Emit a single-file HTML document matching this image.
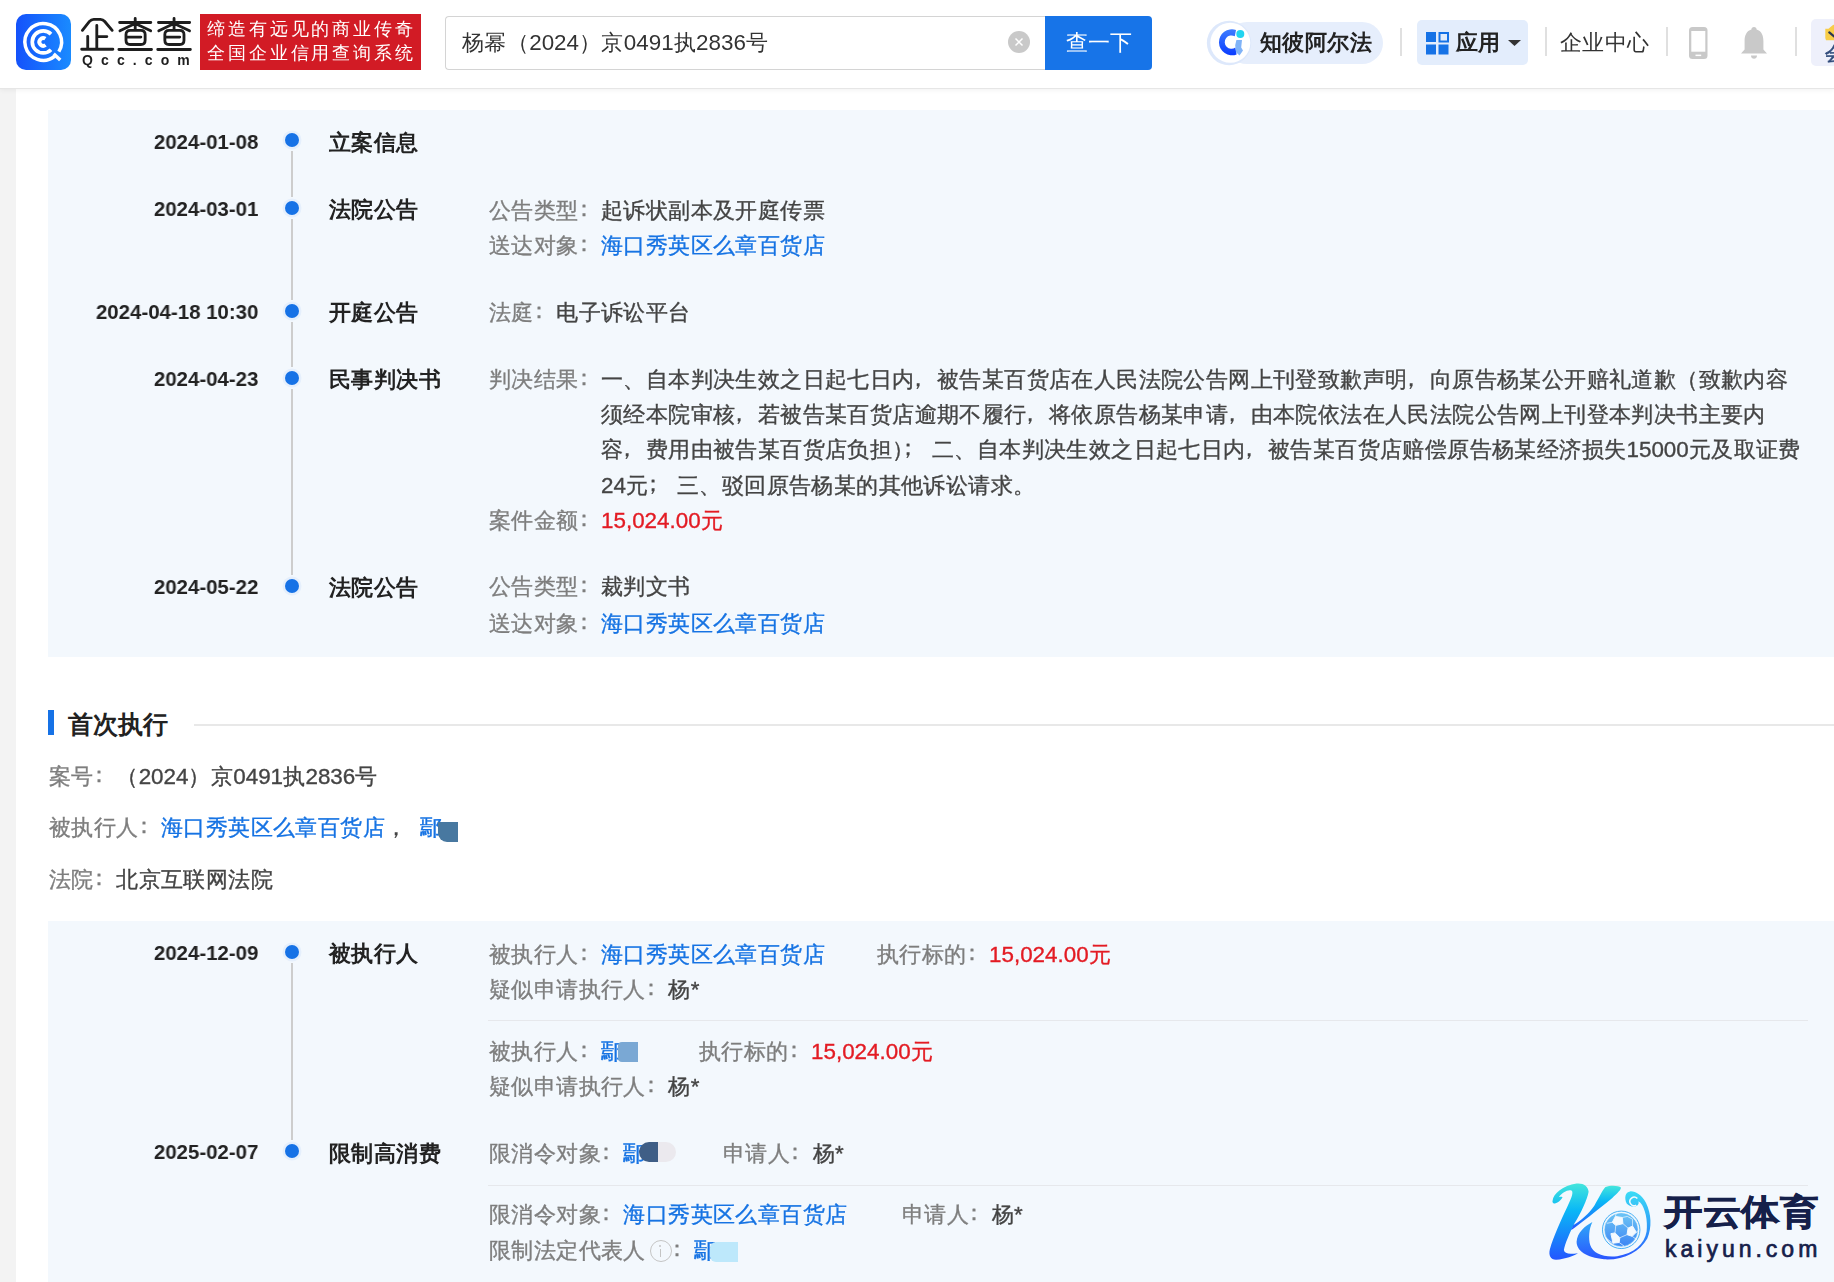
<!DOCTYPE html>
<html><head><meta charset="utf-8">
<style>
*{box-sizing:border-box;margin:0;padding:0}
html,body{width:1834px;height:1282px;overflow:hidden}
body{font-family:"Liberation Sans",sans-serif;background:#fff;position:relative;color:#333}
.hdr{position:absolute;left:0;top:0;width:1834px;height:88px;background:#fff;z-index:5;box-shadow:0 1px 0 #e6e6e6,0 2px 5px rgba(0,0,0,0.06)}
.strip{position:absolute;left:0;top:88px;width:16px;height:1194px;background:#f3f3f3}
.panel{position:absolute;left:48px;width:1786px;background:#f3f8fd}
.ln{position:absolute;white-space:nowrap;font-size:22.4px;line-height:35px;height:35px;letter-spacing:0.4px;-webkit-text-stroke-width:0.35px}
.as{letter-spacing:0}
.ln,.tt,.dt,.hdr div{will-change:transform}
.pc{position:relative;left:-5.8px;top:-2.4px}
.pm{position:relative;left:-7.3px;top:-1px}
.ps{position:relative;left:-6px;top:-2px}
.lb{color:#7e7e7e}
.vl{color:#444}
.lk{color:#1673e3}
.rd{color:#e31b23}
.dt{position:absolute;left:0;width:258.4px;text-align:right;transform:scaleX(0.973);transform-origin:258.4px 0;font-size:21px;font-weight:bold;line-height:35px;color:#222;white-space:nowrap}
.dot{position:absolute;left:285px;width:14px;height:14px;border-radius:50%;background:#1672e6;box-shadow:0 0 0 2.5px #e5effc}
.vl1{position:absolute;left:291.4px;width:1.3px;background:#cdcdcd}
.tt{position:absolute;left:328.5px;letter-spacing:0.4px;font-size:22.4px;font-weight:bold;line-height:35px;color:#222;white-space:nowrap}
.sep{position:absolute;left:488px;width:1320px;height:1px;background:#e6e8ec}
.info{display:inline-block;width:22px;height:22px;border:1.5px solid #c4c4c4;border-radius:50%;vertical-align:-4px;margin-left:4px;margin-right:0;position:relative}
.info:before{content:"";position:absolute;left:8.75px;top:7.5px;width:1.5px;height:8px;background:#c4c4c4}
.info:after{content:"";position:absolute;left:8.5px;top:3.8px;width:2px;height:2px;border-radius:1px;background:#c4c4c4}
</style></head><body>
<div class="hdr">
  <!-- logo icon -->
  <div style="position:absolute;left:16px;top:14px;width:55px;height:56px;border-radius:10px;background:linear-gradient(90deg,#1452fb,#1a8bff)">
    <svg width="55" height="56" viewBox="0 0 55 56" style="position:absolute;left:0;top:0">
      <g fill="none" stroke="#fff">
        <path d="M42.81 37.67 A18.35 18.35 0 1 0 38.55 42.41" stroke-width="3.5"/>
        <path d="M37.6 39.9 L44.25 46.0" stroke-width="3.5"/>
        <path d="M35.03 20.17 A11 11 0 1 0 35.03 35.73" stroke-width="3.7"/>
        <path d="M29.35 24.72 A3.85 3.85 0 1 0 29.57 31.02" stroke-width="3.9"/>
      </g>
    </svg>
  </div>
  <svg width="130" height="68" viewBox="0 0 1834 959" style="position:absolute;left:70px;top:8px">
    <g fill="none" stroke="#1e1e1e" stroke-width="40" stroke-linecap="round" stroke-linejoin="round">
      <path d="M175 315 L275 190 Q300 160 335 160 L430 160 Q465 160 490 190 L595 315"/>
      <path d="M378 245 L378 570 M378 403 L520 403 M250 400 L250 570 M165 582 L605 582"/>
      <g id="cha">
        <path d="M700 205 L1140 205 M920 148 L920 300 M912 222 L705 322 M928 222 L1138 322"/>
        <path d="M850 315 L1000 315 Q1060 315 1060 375 L1060 455 Q1060 515 1000 515 L850 515 Q790 515 790 455 L790 375 Q790 315 850 315 Z"/>
        <path d="M800 410 L1000 410 M690 585 L1150 585"/>
      </g>
      <use href="#cha" x="548"/>
    </g>
  </svg>
  <div style="position:absolute;left:82px;top:50.6px;font-size:14px;line-height:18px;color:#1e1e1e;font-weight:bold;letter-spacing:8.1px;white-space:nowrap">Qcc.com</div>
  <div style="position:absolute;left:200px;top:14px;width:221px;height:56px;background:#d21b25;color:#fff;font-size:18px;line-height:24.5px;padding:2.5px 0 0 7px;letter-spacing:2.9px;white-space:nowrap">缔造有远见的商业传奇<br>全国企业信用查询系统</div>
  <!-- search -->
  <div style="position:absolute;left:445px;top:16px;width:602px;height:54px;border:1px solid #d4d4d4;border-right:none;border-radius:4px 0 0 4px;background:#fff"></div>
  <div style="position:absolute;left:462px;top:25px;font-size:22.4px;line-height:35px;color:#333;white-space:nowrap;letter-spacing:0.4px">杨幂（<span class="as">2024</span>）京<span class="as">0491</span>执<span class="as">2836</span>号</div>
  <div style="position:absolute;left:1008px;top:31px;width:22px;height:22px;border-radius:50%;background:#c9c9c9">
    <svg width="22" height="22" viewBox="0 0 22 22" style="position:absolute;left:0;top:0"><path d="M7.5 7.5 L14.5 14.5 M14.5 7.5 L7.5 14.5" stroke="#fff" stroke-width="1.5"/></svg>
  </div>
  <div style="position:absolute;left:1045px;top:16px;width:107px;height:54px;background:#1774e8;border-radius:0 4px 4px 0;color:#fff;font-size:22.4px;line-height:54px;text-align:center;white-space:nowrap">查一下</div>
  <!-- zhibi -->
  <div style="position:absolute;left:1226px;top:22px;width:157px;height:42px;border-radius:21px;background:#e6eefc"></div>
  <svg width="50" height="50" viewBox="0 0 50 50" style="position:absolute;left:1204px;top:18px">
    <defs><linearGradient id="cg" x1="0" y1="0" x2="0" y2="1"><stop offset="0" stop-color="#3f7dff"/><stop offset="1" stop-color="#0a3cff"/></linearGradient></defs>
    <circle cx="25.05" cy="24.97" r="22.2" fill="#dde8fb"/>
    <circle cx="26.3" cy="24.85" r="20" fill="#fff"/>
    <path d="M32 11.9 A13 13 0 1 0 32.6 36.4 L31.4 29.5 A6.7 6.7 0 1 1 30.8 18.3 Z" fill="url(#cg)"/>
    <circle cx="36.3" cy="16" r="4" fill="#22d4f0"/>
    <path d="M32.4 22 L38 22 L37.2 29.6 L39 32.4 L35.5 37.6 L32 34.3 L31.2 27.3 Z" fill="#80b3f7"/>
  </svg>
  <div style="position:absolute;left:1259.5px;top:25px;font-size:22.4px;line-height:35px;color:#222;font-weight:bold;white-space:nowrap;letter-spacing:0.4px">知彼阿尔法</div>
  <div style="position:absolute;left:1400px;top:28px;width:1.5px;height:28px;background:#e0e0e0"></div>
  <div style="position:absolute;left:1417px;top:20px;width:111px;height:45px;border-radius:5px;background:#e3edfc"></div>
  <svg width="23" height="23" viewBox="0 0 23 23" style="position:absolute;left:1426px;top:31.5px">
    <rect x="0" y="0" width="10" height="10" fill="#1672e6"/>
    <rect x="13.5" y="1" width="8.5" height="8.5" fill="none" stroke="#1672e6" stroke-width="2"/>
    <rect x="0" y="12.5" width="10" height="10" fill="#1672e6"/>
    <rect x="12.5" y="12.5" width="10" height="10" fill="#1672e6"/>
  </svg>
  <div style="position:absolute;left:1455.5px;top:25px;font-size:22.4px;line-height:35px;color:#222;font-weight:bold;white-space:nowrap;letter-spacing:0.4px">应用</div>
  <svg width="13" height="7" viewBox="0 0 13 7" style="position:absolute;left:1507.5px;top:40px"><path d="M0 0 L13 0 L6.5 6 Z" fill="#333"/></svg>
  <div style="position:absolute;left:1545px;top:27px;width:1.5px;height:29px;background:#e0e0e0"></div>
  <div style="position:absolute;left:1560px;top:25px;font-size:22.4px;line-height:35px;color:#333;white-space:nowrap;letter-spacing:0.4px">企业中心</div>
  <div style="position:absolute;left:1666px;top:27px;width:1.5px;height:29px;background:#e0e0e0"></div>
  <svg width="20" height="33" viewBox="0 0 20 33" style="position:absolute;left:1688.5px;top:27px">
    <rect x="0" y="0" width="18.5" height="32" rx="3.5" fill="#c9c9c9"/>
    <rect x="2.3" y="4" width="14" height="20.7" fill="#fff"/>
    <rect x="6.5" y="27.6" width="5.7" height="1.5" fill="#fff"/>
  </svg>
  <svg width="27" height="33" viewBox="0 0 27 33" style="position:absolute;left:1741px;top:27px">
    <path d="M13 0 C14.6 0 15.6 1.2 15.6 2.6 C20.5 4 22.4 8.5 22.4 14 L22.4 22.5 L26 26.5 L0 26.5 L3.6 22.5 L3.6 14 C3.6 8.5 5.5 4 10.4 2.6 C10.4 1.2 11.4 0 13 0 Z" fill="#c9c9c9"/>
    <path d="M10 28.5 L16 28.5 C16 30.6 14.6 31.8 13 31.8 C11.4 31.8 10 30.6 10 28.5 Z" fill="#c9c9c9"/>
  </svg>
  <div style="position:absolute;left:1795px;top:27px;width:1.5px;height:29px;background:#e0e0e0"></div>
  <div style="position:absolute;left:1811px;top:19px;width:40px;height:47px;border-radius:5px;background:#eef0fb"></div>
  <svg width="12" height="18" viewBox="0 0 12 18" style="position:absolute;left:1824.5px;top:24px">
    <path d="M0.3 4.8 L3.5 4.8 L5.5 3 L8 1 L10.5 0.3 L12 0.3 L12 16.3 L1 16.3 L0.3 14 Z" fill="#f8cd48"/>
    <path d="M4.3 8.4 L9.5 12.8 L12 10.5" fill="none" stroke="#2b3652" stroke-width="2.2" stroke-linecap="round"/>
  </svg>
  <div style="position:absolute;left:1825px;top:42.5px;font-size:19px;line-height:22px;color:#2f4a7a;white-space:nowrap;-webkit-text-stroke:0.6px #2f4a7a">会</div>
</div>
<div class="strip"></div>
<div class="panel" style="top:110px;height:546.5px"></div>
<div class="dt" style="top:123.65px">2024-01-08</div><div class="dot" style="top:133.4px"></div><div class="tt" style="top:124.9px">立案信息</div><div class="vl1" style="top:151.4px;height:45.4px"></div><div class="dt" style="top:191.05px">2024-03-01</div><div class="dot" style="top:200.8px"></div><div class="tt" style="top:192.3px">法院公告</div><div class="vl1" style="top:218.8px;height:80.8px"></div><div class="dt" style="top:293.85px">2024-04-18 10:30</div><div class="dot" style="top:303.6px"></div><div class="tt" style="top:295.1px">开庭公告</div><div class="vl1" style="top:321.6px;height:45.0px"></div><div class="dt" style="top:360.85px">2024-04-23</div><div class="dot" style="top:370.6px"></div><div class="tt" style="top:362.1px">民事判决书</div><div class="vl1" style="top:388.6px;height:186.2px"></div><div class="dt" style="top:569.05px">2024-05-22</div><div class="dot" style="top:578.8px"></div><div class="tt" style="top:570.3px">法院公告</div><div class="ln" style="left:488.5px;top:192.5px;"><span class="lb">公告类型<span class="pc">：</span></span><span class="vl">起诉状副本及开庭传票</span></div><div class="ln" style="left:488.5px;top:227.5px;"><span class="lb">送达对象<span class="pc">：</span></span><span class="lk">海口秀英区么章百货店</span></div><div class="ln" style="left:488.5px;top:294.5px;"><span class="lb">法庭<span class="pc">：</span></span><span class="vl">电子诉讼平台</span></div><div class="ln" style="left:488.5px;top:361.7px;"><span class="lb">判决结果<span class="pc">：</span></span></div><div class="ln" style="left:600.5px;top:361.7px;"><span class="vl">一、自本判决生效之日起七日内<span class="pm">，</span>被告某百货店在人民法院公告网上刊登致歉声明<span class="pm">，</span>向原告杨某公开赔礼道歉（致歉内容</span></div><div class="ln" style="left:600.5px;top:397.0px;"><span class="vl">须经本院审核<span class="pm">，</span>若被告某百货店逾期不履行<span class="pm">，</span>将依原告杨某申请<span class="pm">，</span>由本院依法在人民法院公告网上刊登本判决书主要内</span></div><div class="ln" style="left:600.5px;top:432.3px;"><span class="vl">容<span class="pm">，</span>费用由被告某百货店负担<span style="letter-spacing:-10.8px">）</span><span class="ps">；</span><span class="as"> </span>二、自本判决生效之日起七日内<span class="pm">，</span>被告某百货店赔偿原告杨某经济损失<span class="as">15000</span>元及取证费</span></div><div class="ln" style="left:600.5px;top:467.6px;"><span class="vl"><span class="as">24</span>元<span class="ps">；</span><span class="as"> </span>三、驳回原告杨某的其他诉讼请求。</span></div><div class="ln" style="left:488.5px;top:502.5px;"><span class="lb">案件金额<span class="pc">：</span></span><span class="rd"><span class="as">15,024.00</span>元</span></div><div class="ln" style="left:488.5px;top:569.0px;"><span class="lb">公告类型<span class="pc">：</span></span><span class="vl">裁判文书</span></div><div class="ln" style="left:488.5px;top:605.5px;"><span class="lb">送达对象<span class="pc">：</span></span><span class="lk">海口秀英区么章百货店</span></div>
<!-- section heading -->
<div style="position:absolute;left:48px;top:710px;width:6px;height:25px;background:#1672e6"></div>
<div style="position:absolute;left:68px;top:707px;font-size:25px;line-height:35px;font-weight:bold;color:#222;white-space:nowrap">首次执行</div>
<div style="position:absolute;left:194px;top:724px;width:1640px;height:1.5px;background:#e8e8e8"></div>
<div class="ln" style="left:48.5px;top:758.5px;"><span class="lb">案号<span class="pc">：</span></span><span class="vl">（<span class="as">2024</span>）京<span class="as">0491</span>执<span class="as">2836</span>号</span></div><div class="ln" style="left:48.5px;top:810.0px;"><span class="lb">被执行人<span class="pc">：</span></span><span class="lk">海口秀英区么章百货店</span><span class="vl">，</span><span class="lk" style="margin-left:13px">鄢</span></div><div style="position:absolute;left:438px;top:822px;width:20px;height:20px;background:#4878a0;border-radius:0 0 0 9px"></div><div class="ln" style="left:48.5px;top:861.5px;"><span class="lb">法院<span class="pc">：</span></span><span class="vl">北京互联网法院</span></div>
<div class="panel" style="top:921px;height:361px"></div>
<div class="dt" style="top:935.05px">2024-12-09</div><div class="dot" style="top:944.8px"></div><div class="tt" style="top:936.3px">被执行人</div><div class="dt" style="top:1134.45px">2025-02-07</div><div class="dot" style="top:1144.2px"></div><div class="tt" style="top:1135.7px">限制高消费</div><div class="vl1" style="top:962.8px;height:177.4px"></div><div class="ln" style="left:488.5px;top:936.5px;"><span class="lb">被执行人<span class="pc">：</span></span><span class="lk">海口秀英区么章百货店</span></div><div class="ln" style="left:877.4px;top:936.5px;"><span class="lb">执行标的<span class="pc">：</span></span><span class="rd"><span class="as">15,024.00</span>元</span></div><div class="ln" style="left:488.5px;top:971.5px;"><span class="lb">疑似申请执行人<span class="pc">：</span></span><span class="vl">杨<span class="as">*</span></span></div><div class="sep" style="top:1020px"></div><div class="ln" style="left:488.5px;top:1033.5px;"><span class="lb">被执行人<span class="pc">：</span></span><span class="lk">鄢</span></div><div style="position:absolute;left:618px;top:1042px;width:20px;height:20px;background:#7aa8d4;border-radius:4px 0 0 4px"></div><div class="ln" style="left:699px;top:1033.5px;"><span class="lb">执行标的<span class="pc">：</span></span><span class="rd"><span class="as">15,024.00</span>元</span></div><div class="ln" style="left:488.5px;top:1068.5px;"><span class="lb">疑似申请执行人<span class="pc">：</span></span><span class="vl">杨<span class="as">*</span></span></div><div class="ln" style="left:488.5px;top:1135.5px;"><span class="lb">限消令对象<span class="pc">：</span></span><span class="lk">鄢</span></div><div style="position:absolute;left:658px;top:1142px;width:18px;height:20px;background:#ebe9ee;border-radius:0 10px 10px 0"></div><div style="position:absolute;left:639px;top:1142px;width:19px;height:20px;background:#3f5e86;border-radius:10px 0 0 10px"></div><div class="ln" style="left:722.7px;top:1135.5px;"><span class="lb">申请人<span class="pc">：</span></span><span class="vl">杨<span class="as">*</span></span></div><div class="sep" style="top:1184.5px"></div><div class="ln" style="left:488.5px;top:1197.0px;"><span class="lb">限消令对象<span class="pc">：</span></span><span class="lk">海口秀英区么章百货店</span></div><div class="ln" style="left:902px;top:1197.0px;"><span class="lb">申请人<span class="pc">：</span></span><span class="vl">杨<span class="as">*</span></span></div><div class="ln" style="left:488.5px;top:1232.5px;"><span class="lb">限制法定代表人</span><span class="info"></span><span class="lb"><span class="pc">：</span></span><span class="lk">鄢</span></div><div style="position:absolute;left:710px;top:1242px;width:28px;height:20px;background:#bde8fb;border-radius:6px 0 0 6px"></div>
<!-- kaiyun logo -->
<svg width="110" height="88" viewBox="0 0 1602 1282" style="position:absolute;left:1545px;top:1178px">
  <defs>
    <linearGradient id="kg" x1="0" y1="0" x2="0" y2="1"><stop offset="0" stop-color="#44e6dc"/><stop offset="0.35" stop-color="#0ab8f6"/><stop offset="1" stop-color="#2456ff"/></linearGradient>
    <linearGradient id="kg2" x1="0" y1="0" x2="0" y2="1"><stop offset="0" stop-color="#3bdcf6"/><stop offset="0.5" stop-color="#2ea0f8"/><stop offset="1" stop-color="#2a55ff"/></linearGradient>
    <linearGradient id="bg" x1="0" y1="0" x2="0" y2="1"><stop offset="0" stop-color="#6ec6f5"/><stop offset="1" stop-color="#3c84f4"/></linearGradient>
  </defs>
  <path d="M110 330 C120 230 260 110 460 80 C560 70 630 120 635 200 C620 300 520 520 430 660 C360 800 290 960 275 1050 C285 1110 360 1110 480 1095 C420 1130 300 1180 160 1190 C80 1190 50 1120 70 1040 C120 860 230 620 320 430 C370 320 420 220 390 185 C340 160 250 210 200 280 C220 275 240 270 255 282 C230 330 170 380 130 370 C110 360 105 345 110 330 Z" fill="url(#kg)"/>
  <path d="M380 760 C520 660 760 470 980 290 C1060 220 1110 170 1105 140 C1080 110 960 100 880 130 C840 170 800 260 720 400 C640 520 520 620 410 690 Z" fill="url(#kg)"/>
  <path d="M690 640 C580 700 470 790 460 930 C460 1060 600 1160 860 1185 C1140 1200 1380 1080 1490 880 C1560 720 1550 520 1470 360 C1410 250 1320 190 1240 195 C1170 200 1150 290 1190 370 C1230 420 1330 440 1360 380 C1380 330 1330 290 1280 310 C1250 330 1250 360 1270 370 C1260 320 1330 300 1390 360 C1460 440 1500 620 1480 780 C1450 960 1300 1100 1050 1140 C850 1160 700 1100 660 980 C630 880 640 740 690 640 Z" fill="url(#kg2)"/>
  <path d="M1345 300 A62 62 0 1 0 1330 395" fill="none" stroke="#f3f8fd" stroke-width="22"/>
  <circle cx="1290" cy="350" r="30" fill="#3cc8f6"/>
  <circle cx="1110" cy="755" r="273" fill="#eef6fd" stroke="#43aef5" stroke-width="14"/>
  <circle cx="1110" cy="755" r="246" fill="url(#bg)" stroke="#eef6fd" stroke-width="12"/>
  <circle cx="1110" cy="755" r="238" fill="none" stroke="#5ab8f5" stroke-width="8"/>
  <g fill="#f4f9fe" stroke="#f4f9fe" stroke-width="14" stroke-linejoin="round">
    <path d="M1025 560 L1125 575 L1135 665 L1030 690 L980 645 Z"/>
    <path d="M1210 730 L1275 700 L1330 790 L1270 850 L1195 825 Z"/>
    <path d="M960 810 L1020 800 L1090 870 L1080 940 L990 950 Z"/>
  </g>
  <g fill="none" stroke="#f4f9fe" stroke-width="10">
    <path d="M1125 575 L1200 560 L1275 600 L1275 700 M1135 665 L1210 730 M1030 690 L1020 800 M980 645 L900 660 M1090 870 L1195 825 M1080 940 L1150 990 M990 950 L880 870 M1270 850 L1340 900 M1025 560 L1040 505 M1330 790 L1365 760"/>
  </g>
</svg>
<div style="position:absolute;left:1664px;top:1190px;font-size:35px;line-height:44px;font-weight:bold;color:#15204a;white-space:nowrap;transform:scaleX(1.1);transform-origin:0 0;-webkit-text-stroke:0.6px #15204a">开云体育</div>
<div style="position:absolute;left:1665px;top:1234.5px;font-size:23px;line-height:28px;color:#15204a;white-space:nowrap;letter-spacing:4px;-webkit-text-stroke:0.7px #15204a">kaiyun.com</div>
</body></html>
